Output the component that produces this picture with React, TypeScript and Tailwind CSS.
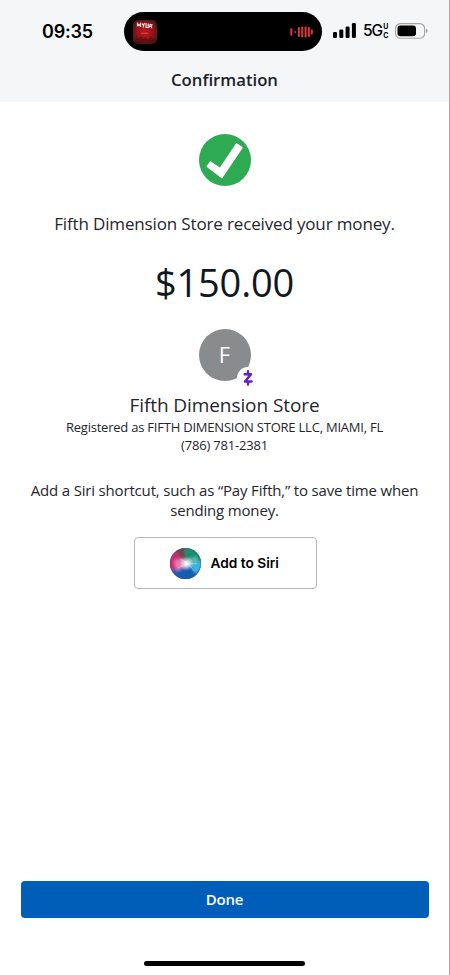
import type { ReactNode } from "react";

const signalBars = [
  { x: 0, h: 6 },
  { x: 6.3, h: 8.5 },
  { x: 12.6, h: 11.5 },
  { x: 18.9, h: 15 },
];

const audioBars = [
  { x: 0.5, h: 7.5 },
  { x: 4.5, h: 2 },
  { x: 8, h: 10 },
  { x: 11.5, h: 11 },
  { x: 14.8, h: 11 },
  { x: 18, h: 10 },
  { x: 21, h: 5 },
];

function AlbumArt() {
  return (
    <svg width="24" height="24" viewBox="0 0 24 24">
      <defs>
        <radialGradient id="album" cx="50%" cy="50%" r="65%">
          <stop offset="0" stopColor="#c4161a" />
          <stop offset="0.5" stopColor="#94151a" />
          <stop offset="1" stopColor="#3d1517" />
        </radialGradient>
      </defs>
      <rect width="24" height="24" rx="5" fill="url(#album)" />
      <path d="M2 20l2-3 2 2 2-3 2 3 3-2 2 3 3-4 2 3 2-2v4q-1 3-4 3H6q-4 0-4-4z" fill="#4a0d10" opacity="0.6" />
      <path
        d="M4.500 6.500V3.500l1.500 2 1.500-2v3.500M9 3.500l1.500 2 1-2.500M10.500 5.500v2M13 3v4.500h2.200V3.500M16.500 7.500l.5-3 2 .5-1 1.500 1 1.500"
        fill="none"
        stroke="#f3dcdc"
        strokeWidth="1.200"
      />
      <path d="M8 13.300h7" stroke="#e8585b" strokeWidth="0.8" />
    </svg>
  );
}

function AudioWave() {
  return (
    <svg width="23" height="14" viewBox="0 0 23 14">
      {audioBars.map((b) => (
        <rect key={b.x} x={b.x - 0.2} y={7 - b.h / 2} width="2" height={b.h} rx="1" fill="#e2393c" />
      ))}
    </svg>
  );
}

function Signal() {
  return (
    <svg width="23" height="15" viewBox="0 0 23 15">
      {signalBars.map((b) => (
        <rect key={b.x} x={b.x} y={15 - b.h} width="4" height={b.h} rx="1.2" fill="#000" />
      ))}
    </svg>
  );
}

function Battery() {
  return (
    <svg width="33" height="16" viewBox="0 0 33 16">
      <rect x="0.600" y="0.600" width="29" height="14.600" rx="4.800" fill="none" stroke="#a2a3a5" strokeWidth="1.100" />
      <rect x="2.500" y="2.500" width="18.500" height="10.800" rx="3" fill="#000" />
      <path d="M31 5.700q1.500.6 1.500 2.200T31 10.100z" fill="#97989a" />
    </svg>
  );
}

function StatusBar() {
  return (
    <div className="flex h-[51px] items-end font-['Inter','Liberation_Sans',sans-serif]">
      <div className="flex h-[39px] w-[124px] shrink-0 items-center pl-[42px] text-[18px] font-semibold tracking-[-0.2px] text-black">
        09:35
      </div>
      <div className="flex h-[39px] w-[198px] shrink-0 items-center justify-between rounded-full bg-black pr-[9px] pl-[9px]">
        <AlbumArt />
        <AudioWave />
      </div>
      <div className="flex h-[39px] items-center pb-[2px] pl-[11px]">
        <Signal />
        <div className="ml-[7px] flex h-[15px] w-[25px] items-center text-[15.500px] font-medium tracking-[-1px] text-black">
          5G
          <span className="ml-[1px] flex flex-col text-[7px] leading-[9px] font-bold tracking-normal">
            <span>U</span>
            <span>C</span>
          </span>
        </div>
        <div className="ml-[7px]">
          <Battery />
        </div>
      </div>
    </div>
  );
}

function CheckBadge() {
  return (
    <svg width="52" height="52" viewBox="0 0 52 52" className="shrink-0">
      <circle cx="26" cy="26" r="26" fill="#2eaa53" />
      <path
        d="M11.500 28L8.200 32.500L22.800 43.500L43 13.500L37.500 9.800L21.200 34.500z"
        fill="#fff"
        stroke="#fff"
        strokeWidth="1.400"
        strokeLinejoin="round"
      />
    </svg>
  );
}

function Avatar({ letter }: { letter: string }) {
  return (
    <div className="relative flex size-[52px] shrink-0 items-center justify-center rounded-full bg-[#8a8b8c]">
      <span className="pb-[2px] text-[22px] text-white">{letter}</span>
      <div className="absolute top-[38px] left-[38px] flex size-[22px] items-center justify-center rounded-full bg-white">
        <svg width="10" height="16" viewBox="0 0 10 16" fill="none" stroke="#6420c4" strokeLinejoin="round">
          <path d="M1.700 4.200H8L2 11.500H8.500" strokeWidth="2.500" strokeLinecap="round" />
          <path d="M5 1.300v3M5 12v2.600" strokeWidth="2.400" strokeLinecap="round" />
        </svg>
      </div>
    </div>
  );
}

function SiriOrb() {
  return (
    <svg width="31" height="31" viewBox="0 0 30 30">
      <defs>
        <clipPath id="orb">
          <circle cx="15" cy="15" r="15" />
        </clipPath>
        <filter id="soft" x="-40%" y="-40%" width="180%" height="180%">
          <feGaussianBlur stdDeviation="1.600" />
        </filter>
        <radialGradient id="glow">
          <stop offset="0" stopColor="#fff" />
          <stop offset="0.300" stopColor="#f4fbff" stopOpacity="0.850" />
          <stop offset="1" stopColor="#d5eeff" stopOpacity="0" />
        </radialGradient>
      </defs>
      <g clipPath="url(#orb)">
        <rect width="30" height="30" fill="#35455f" />
        <g filter="url(#soft)">
          <path d="M12-3h21v17L17 14z" fill="#149070" />
          <path d="M-3 4l10-2 7 12-5 11-12 1z" fill="#d02b73" />
          <path d="M1 21l14-5 15 5-4 12H5z" fill="#145db0" />
          <path d="M18 15l15-3v9l-8 4z" fill="#38b4e2" />
          <path d="M5-1h9l1 12-6-2z" fill="#65484f" />
          <path d="M4 12l9-2 2 8-9 4z" fill="#e77db4" />
          <path d="M16 12l9-4 3 5-9 4z" fill="#58b9ae" />
        </g>
        <circle cx="16" cy="15" r="7" fill="url(#glow)" />
        <path d="M10 11q7 2 14 12M8 19q8-4 18-4" stroke="#fff" strokeWidth="0.700" fill="none" opacity="0.500" />
      </g>
      <circle cx="15" cy="15" r="14.500" fill="none" stroke="#4d5268" strokeOpacity="0.400" />
    </svg>
  );
}

function Line({ className, children }: { className: string; children: ReactNode }) {
  return <p className={`text-center whitespace-nowrap ${className}`}>{children}</p>;
}

export default function App() {
  return (
    <div className="flex h-[975px] w-[450px] flex-col border-r border-[#a9abad] bg-white font-['Open_Sans','Noto_Sans',sans-serif] text-[#1f262c]">
      <header className="h-[102px] shrink-0 bg-[#f5f6f8]">
        <StatusBar />
        <h1 className="mt-[17px] text-center text-[16.700px] leading-6 font-semibold text-[#1b2329]">Confirmation</h1>
      </header>

      <main className="flex flex-1 flex-col items-center pt-8">
        <CheckBadge />
        <Line className="mt-[26px] text-[17px] leading-6 tracking-[-0.150px]">
          Fifth Dimension Store received your money.
        </Line>
        <Line className="mt-[21px] text-[38px] leading-[50px] tracking-[-0.200px] text-[#10181e]">$150.00</Line>
        <div className="mt-[22px]">
          <Avatar letter="F" />
        </div>
        <Line className="mt-[11px] text-[19px] leading-[26px] tracking-[-0.080px]">Fifth Dimension Store</Line>
        <Line className="text-[13px] leading-[18px] tracking-[-0.220px]">
          Registered as FIFTH DIMENSION STORE LLC, MIAMI, FL
        </Line>
        <Line className="text-[13px] leading-[18px] tracking-[-0.200px]">(786) 781-2381</Line>
        <Line className="mt-[26px] text-[15px] leading-5 tracking-[-0.170px]">
          Add a Siri shortcut, such as “Pay Fifth,” to save time when
          <br />
          sending money.
        </Line>
        <button className="mt-[17px] ml-px flex h-[52px] w-[183px] items-center rounded-[4px] border border-[#b5b6b8] pl-[35px] font-['Inter','Liberation_Sans',sans-serif] text-[13.700px] font-semibold text-black">
          <SiriOrb />
          <span className="ml-[10px]">Add to Siri</span>
        </button>
      </main>

      <footer className="flex shrink-0 flex-col items-center pb-[9px]">
        <button className="h-[37px] w-[408px] rounded-[4px] bg-[#005eb8] text-[15px] font-semibold tracking-[-0.200px] text-white">
          Done
        </button>
        <div className="mt-[43px] h-[5px] w-[161px] rounded-full bg-black" />
      </footer>
    </div>
  );
}
